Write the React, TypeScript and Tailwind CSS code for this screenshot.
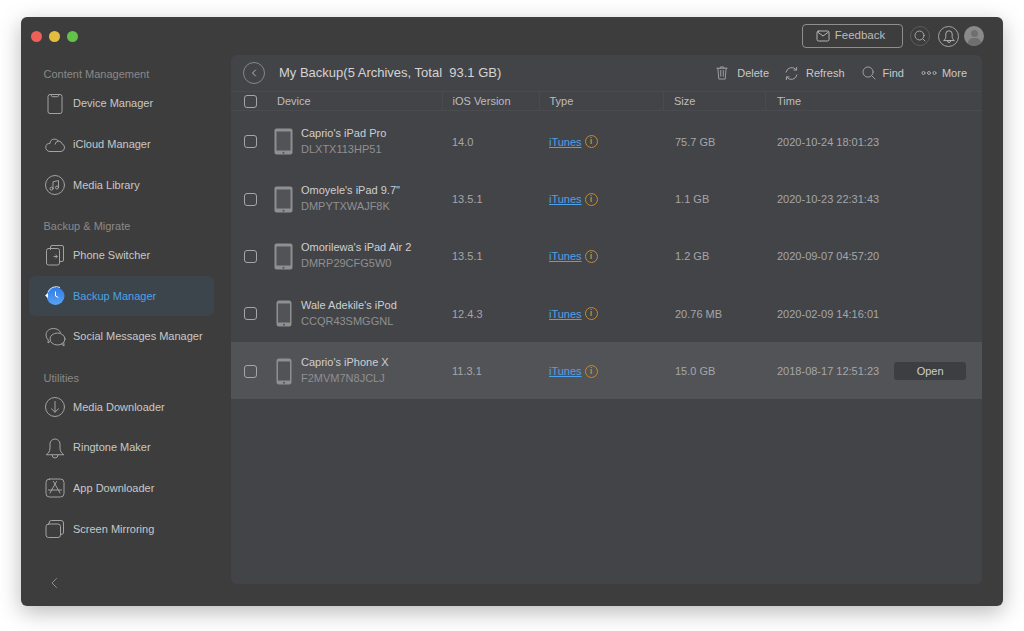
import { ReactNode } from "react";

const stroke = {
  fill: "none",
  stroke: "currentColor",
  strokeWidth: 1,
  strokeLinecap: "round" as const,
  strokeLinejoin: "round" as const,
};

function Icon({ children, size = 22 }: { children: ReactNode; size?: number }) {
  return (
    <svg width={size} height={size} viewBox="0 0 22 22" {...stroke}>
      {children}
    </svg>
  );
}

const icons: Record<string, ReactNode> = {
  device: (
    <Icon>
      <rect x="4" y="1.5" width="14" height="19" rx="2" />
      <path d="M7.5 1.5v1.2a1 1 0 0 0 1 1h5a1 1 0 0 0 1-1V1.500" />
    </Icon>
  ),
  cloud: (
    <Icon>
      <path d="M5.500 18.500h11.500a4 4 0 0 0 1-7.700 3.600 3.600 0 0 0-3.600-2.800A5 5 0 0 0 7 7.500a4 4 0 0 0-1 3 4 4 0 0 0-.5 8z" />
      <path d="M14.400 8a4 4 0 0 0-3.400 3.200" />
    </Icon>
  ),
  music: (
    <Icon>
      <circle cx="11" cy="11" r="9.500" />
      <path d="M9 14.500V7.800l5.500-1.300v6.800" />
      <circle cx="7.500" cy="14.700" r="1.500" />
      <circle cx="13" cy="13.500" r="1.500" />
    </Icon>
  ),
  switcher: (
    <Icon>
      <path d="M6.500 5.500V3a1.500 1.500 0 0 1 1.500-1.500h10A1.500 1.500 0 0 1 19.500 3v13a1.500 1.500 0 0 1-1.500 1.500h-2.500" />
      <rect x="2.500" y="4.500" width="13" height="16.500" rx="2" />
      <path d="M10 12.500h3M11.800 11l1.400 1.500-1.400 1.500" />
    </Icon>
  ),
  social: (
    <Icon>
      <path d="M6 15.500 4 17l.3-3A7 7 0 0 1 2 9c0-4 3.500-6.500 7.500-6.500 3.300 0 6 1.500 7 4" />
      <ellipse cx="13.500" cy="13" rx="7.500" ry="6" />
      <path d="M17.500 18 20 20l-.2-3.500" />
    </Icon>
  ),
  download: (
    <Icon>
      <circle cx="11" cy="11" r="9.500" />
      <path d="M11 5.500v10.500M7.500 12.800 11 16.200l3.500-3.400" />
    </Icon>
  ),
  bell: (
    <Icon>
      <path d="M2.500 17.500c2-1.500 3.500-3 3.500-6.500V7a5 5 0 0 1 10 0v4c0 3.500 1.500 5 3.500 6.500z" />
      <path d="M8 18a3 3 0 0 0 6 0" />
    </Icon>
  ),
  app: (
    <Icon>
      <rect x="2" y="2" width="18" height="18" rx="3.500" />
      <path d="M9.500 4.500 16 16M12.500 4.500 6 16M4.500 13h13" />
    </Icon>
  ),
  mirror: (
    <Icon>
      <rect x="2" y="6" width="14.500" height="13.500" rx="2.500" />
      <path d="M5 6V5a2.500 2.500 0 0 1 2.500-2.500H17A2.500 2.500 0 0 1 19.500 5v9a2.500 2.500 0 0 1-2.500 2.500h-.500" />
    </Icon>
  ),
  backup: (
    <svg width="22" height="22" viewBox="0 0 22 22">
      <defs>
        <linearGradient id="backupFill" x1="0" y1="0" x2="0" y2="1">
          <stop offset="0" stopColor="#2f7be6" />
          <stop offset="1" stopColor="#5aa2f2" />
        </linearGradient>
      </defs>
      <circle cx="11.500" cy="11" r="9" fill="url(#backupFill)" />
      <path d="M4 7a9 9 0 0 1 12-4.500" fill="none" stroke="#dbe9fb" strokeWidth="1" />
      <path d="M11.500 6.500V11l2.800 1.500" fill="none" stroke="#fff" strokeWidth="1" />
      <path d="M1 10.500l3-2.500v5z" fill="#fff" />
    </svg>
  ),
};

const sections = [
  {
    title: "Content Management",
    items: [
      { icon: "device", label: "Device Manager" },
      { icon: "cloud", label: "iCloud Manager" },
      { icon: "music", label: "Media Library" },
    ],
  },
  {
    title: "Backup & Migrate",
    items: [
      { icon: "switcher", label: "Phone Switcher" },
      { icon: "backup", label: "Backup Manager", active: true },
      { icon: "social", label: "Social Messages Manager" },
    ],
  },
  {
    title: "Utilities",
    items: [
      { icon: "download", label: "Media Downloader" },
      { icon: "bell", label: "Ringtone Maker" },
      { icon: "app", label: "App Downloader" },
      { icon: "mirror", label: "Screen Mirroring" },
    ],
  },
];

const rows = [
  { name: "Caprio's iPad Pro", serial: "DLXTX113HP51", ios: "14.0", size: "75.7 GB", time: "2020-10-24 18:01:23", kind: "pad" },
  { name: 'Omoyele\'s iPad 9.7"', serial: "DMPYTXWAJF8K", ios: "13.5.1", size: "1.1 GB", time: "2020-10-23 22:31:43", kind: "pad" },
  { name: "Omorilewa's iPad Air 2", serial: "DMRP29CFG5W0", ios: "13.5.1", size: "1.2 GB", time: "2020-09-07 04:57:20", kind: "pad" },
  { name: "Wale Adekile's iPod", serial: "CCQR43SMGGNL", ios: "12.4.3", size: "20.76 MB", time: "2020-02-09 14:16:01", kind: "phone" },
  { name: "Caprio's iPhone X", serial: "F2MVM7N8JCLJ", ios: "11.3.1", size: "15.0 GB", time: "2018-08-17 12:51:23", kind: "phone", hover: true },
];

function Checkbox() {
  return <span className="block h-[13px] w-[13px] rounded-[3px] border border-[#a5a6a8]" />;
}

function DeviceGlyph({ kind }: { kind: string }) {
  if (kind === "pad") {
    return (
      <svg width="20" height="27" viewBox="0 0 20 27">
        <rect width="18" height="26" x="0.500" y="0.500" rx="2" fill="#8e8f91" />
        <rect x="2.500" y="3.500" width="14" height="19" fill="#525357" />
        <circle cx="9.500" cy="24.700" r="1" fill="#525357" />
      </svg>
    );
  }
  return (
    <svg width="20" height="27" viewBox="0 0 20 27">
      <rect width="15" height="26" x="2.500" y="0.500" rx="2.500" fill="#8e8f91" />
      <rect x="4" y="3.500" width="12" height="19" fill="#525357" />
      <circle cx="10" cy="24.700" r="1" fill="#525357" />
    </svg>
  );
}

function Sidebar() {
  return (
    <aside className="flex w-[210px] shrink-0 flex-col pl-2">
      {sections.map((section, i) => (
        <div key={section.title} className={i === 0 ? "mt-[11.400px]" : "mt-[12.500px]"}>
          <div className="h-[17px] pl-[14.500px] text-[11px] leading-[17px] text-[#8a8a8a]">{section.title}</div>
          <div className="flex flex-col">
            {section.items.map((item) => (
              <div
                key={item.label}
                className={`flex h-[40.700px] w-[185px] items-center gap-[7px] rounded-md pl-[15px] text-[11px] ${
                  item.active ? "bg-[#3c444c] text-[#4da2e8]" : "text-[#c8c8c8]"
                }`}
              >
                <span className="text-[#a3a3a3]">{icons[item.icon]}</span>
                <span>{item.label}</span>
              </div>
            ))}
          </div>
        </div>
      ))}
      <div className="mt-auto mb-[16px] pl-[20px] text-[#8f8f8f]">
        <svg width="10" height="14" viewBox="0 0 10 14" {...stroke}>
          <path d="M7.500 2.500 3 7l4.500 4.500" />
        </svg>
      </div>
    </aside>
  );
}

function ToolButton({ icon, label, className }: { icon: ReactNode; label: string; className: string }) {
  return (
    <div className={`flex items-center ${className}`}>
      <span className="text-[#a9a9ab]">{icon}</span>
      <span>{label}</span>
    </div>
  );
}

function Panel() {
  return (
    <main className="flex h-[529px] w-[751px] flex-col overflow-hidden rounded-md bg-[#434448] text-[#c9c9cb]">
      <div className="flex h-[36px] shrink-0 items-center pl-[12px] pr-[15px] text-[11px]">
        <span className="flex h-[22px] w-[22px] items-center justify-center rounded-full border border-[#86878a] text-[#b5b5b7]">
          <svg width="8" height="10" viewBox="0 0 8 10" {...stroke}>
            <path d="M5.500 2 2.500 5l3 3" />
          </svg>
        </span>
        <span className="ml-[14px] text-[13px] text-[#d4d4d5]">My Backup(5 Archives, Total&nbsp; 93.1 GB)</span>
        <div className="ml-auto flex items-center">
          <ToolButton
            label="Delete"
            className="gap-[8px]"
            icon={
              <Icon size={14}>
                <path d="M3 3.500h16M8 3.500 8.500 1.500h5l.5 2M4.500 3.500 6 20.500h10l1.500-17M9 7v9M13 7v9" strokeWidth="1.400" />
              </Icon>
            }
          />
          <ToolButton
            label="Refresh"
            className="ml-[15px] gap-[7px]"
            icon={
              <Icon size={15}>
                <path d="M3 9a8.500 8.500 0 0 1 15-3.500M19 13a8.500 8.500 0 0 1-15 3.500" strokeWidth="1.400" />
                <path d="M18.500 2v4h-4M3.500 20v-4h4" strokeWidth="1.400" />
              </Icon>
            }
          />
          <ToolButton
            label="Find"
            className="ml-[17px] gap-[7px]"
            icon={
              <Icon size={14}>
                <circle cx="9.500" cy="9.500" r="8" strokeWidth="1.400" />
                <path d="m15.500 15.500 5 5" strokeWidth="1.400" />
              </Icon>
            }
          />
          <ToolButton
            label="More"
            className="ml-[17px] gap-[5px]"
            icon={
              <svg width="16" height="6" viewBox="0 0 16 6" {...stroke}>
                <circle cx="2.500" cy="3" r="1.500" />
                <circle cx="8" cy="3" r="1.500" />
                <circle cx="13.500" cy="3" r="1.500" />
              </svg>
            }
          />
        </div>
      </div>

      <div className="flex h-[20px] shrink-0 items-center border-y border-[#4a4b4f] text-[11px] text-[#bdbdbf]">
        <div className="flex w-[35px] items-center pl-[13px]">
          <Checkbox />
        </div>
        <div className="h-full w-[175.500px] pl-[11px] leading-[18px]">Device</div>
        <div className="h-full w-[97px] border-l border-[#4a4b4f] pl-[10px] leading-[18px]">iOS Version</div>
        <div className="h-full w-[124px] border-l border-[#4a4b4f] pl-[10px] leading-[18px]">Type</div>
        <div className="h-full w-[102px] border-l border-[#4a4b4f] pl-[10.500px] leading-[18px]">Size</div>
        <div className="h-full flex-1 border-l border-[#4a4b4f] pl-[11.500px] leading-[18px]">Time</div>
      </div>

      <div className="mt-[1.800px] flex flex-col">
        {rows.map((row) => (
          <div
            key={row.serial}
            className={`flex h-[57.300px] items-center pt-px text-[11px] ${row.hover ? "bg-[#525357]" : ""}`}
          >
            <div className="flex w-[43px] shrink-0 items-center pl-[13px]">
              <Checkbox />
            </div>
            <div className="flex w-[178px] shrink-0 items-center gap-[7px]">
              <DeviceGlyph kind={row.kind} />
              <div className="mb-[2.500px] leading-[16px]">
                <div className="text-[#cfcfd0]">{row.name}</div>
                <div className="text-[#8f9092]">{row.serial}</div>
              </div>
            </div>
            <div className="w-[97px] shrink-0 text-[#a5a6a8]">{row.ios}</div>
            <div className="flex w-[126px] shrink-0 items-center gap-[3px]">
              <span className="text-[#4da2e8] underline">iTunes</span>
              <span className="flex h-[13px] w-[13px] items-center justify-center rounded-full border border-[#c08a3e] text-[9px] font-bold leading-none text-[#c08a3e]">
                i
              </span>
            </div>
            <div className="w-[102px] shrink-0 text-[#a5a6a8]">{row.size}</div>
            <div className="shrink-0 whitespace-nowrap text-[#a5a6a8]">{row.time}</div>
            {row.hover && (
              <button className="ml-[15px] h-[18px] w-[72px] rounded-[3px] bg-[#3d3e41] text-[11px] leading-[18px] text-[#cfcfd0]">
                Open
              </button>
            )}
          </div>
        ))}
      </div>
    </main>
  );
}

export default function App() {
  return (
    <div className="h-[631px] w-[1024px] overflow-hidden bg-white pl-[21px] pt-[17px] font-['Liberation_Sans',Arial,sans-serif]">
      <div className="flex h-[589px] w-[982px] flex-col rounded-md bg-[#3d3d3d] shadow-[0_6px_22px_rgba(0,0,0,0.28)]">
        <header className="flex h-[38px] shrink-0 items-center pl-[10px] pr-[19px]">
          <div className="flex gap-[7px]">
            <span className="h-[11px] w-[11px] rounded-full bg-[#ee5f57]" />
            <span className="h-[11px] w-[11px] rounded-full bg-[#e5bd3e]" />
            <span className="h-[11px] w-[11px] rounded-full bg-[#62c24a]" />
          </div>
          <div className="ml-auto flex items-center">
            <div className="flex h-[24px] w-[101px] items-center justify-center gap-[5px] rounded-[4px] border border-[#8e8e8e] pr-[4px] text-[11.500px] text-[#bcbcbc]">
              <svg width="14" height="12" viewBox="0 0 14 12" {...stroke} className="text-[#b5b5b5]">
                <rect x="1" y="1" width="12" height="10" rx="1.500" />
                <path d="M1.500 2 7 6l5.500-4" />
              </svg>
              <span>Feedback</span>
            </div>
            <span className="ml-[7px] flex h-[20px] w-[20px] items-center justify-center rounded-full border border-[#5b5b5b] text-[#a5a5a5]">
              <svg width="12" height="12" viewBox="0 0 12 12" {...stroke}>
                <circle cx="5.500" cy="5.500" r="4.500" />
                <path d="m9 9 2 2" />
              </svg>
            </span>
            <span className="ml-[8px] flex h-[21px] w-[21px] items-center justify-center rounded-full border border-[#a5a5a5] text-[#b5b5b5]">
              <svg width="14" height="15" viewBox="0 0 22 22" {...stroke} strokeWidth={1.500}>
                <path d="M3 17c2-1.500 3-3 3-6V7a5 5 0 0 1 10 0v4c0 3 1 4.500 3 6z" />
                <path d="M8.500 18a2.500 2.500 0 0 0 5 0" />
              </svg>
            </span>
            <span className="relative ml-[5px] block h-[20px] w-[20px] overflow-hidden rounded-full bg-[#8a8a8a]">
              <span className="absolute left-[6.500px] top-[4px] h-[7px] w-[7px] rounded-full bg-[#6f6f6f]" />
              <span className="absolute left-[3.500px] top-[12px] h-[10px] w-[13px] rounded-full bg-[#6f6f6f]" />
            </span>
          </div>
        </header>
        <div className="flex min-h-0 flex-1">
          <Sidebar />
          <Panel />
        </div>
      </div>
    </div>
  );
}
